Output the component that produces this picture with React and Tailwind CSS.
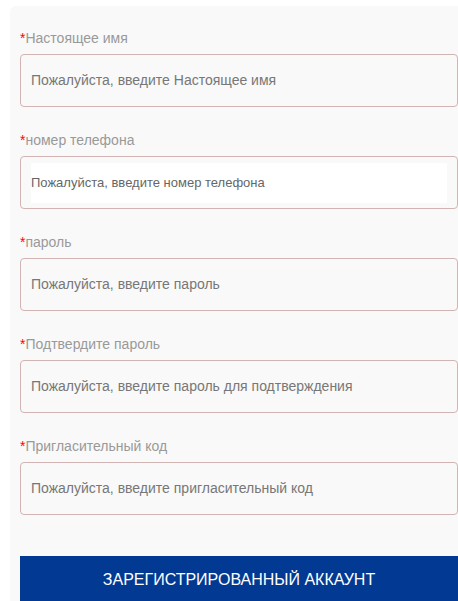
const fields = [
  { label: 'Настоящее имя', placeholder: 'Пожалуйста, введите Настоящее имя' },
  { label: 'номер телефона', placeholder: 'Пожалуйста, введите номер телефона', filled: true },
  { label: 'пароль', placeholder: 'Пожалуйста, введите пароль' },
  { label: 'Подтвердите пароль', placeholder: 'Пожалуйста, введите пароль для подтверждения' },
  { label: 'Пригласительный код', placeholder: 'Пожалуйста, введите пригласительный код' },
];

export default function App() {
  return (
    <div className="w-[458px] h-[601px] overflow-hidden bg-white font-['Liberation_Sans',Arial,sans-serif]">
      <div className="ml-[10px] mt-[6px] w-[460px] rounded-tl-md bg-[#f9f9f9] pl-[10px] pt-[22px] pb-[10px]">
        {fields.map((f) => (
          <div key={f.label} className="mb-[23px] w-[438px]">
            <div className="h-[20px] leading-[20px] text-[14px] text-[#999]">
              <span className="text-[#f00]">*</span>
              {f.label}
            </div>
            <div className="mt-[6px] flex h-[53px] items-center rounded border border-[#d1b4b4] px-[10px]">
              {f.filled ? (
                <div className="flex h-[40px] w-full items-center bg-white text-[13px] text-[#666]">
                  {f.placeholder}
                </div>
              ) : (
                <span className="text-[14px] text-[#777]">{f.placeholder}</span>
              )}
            </div>
          </div>
        ))}
        <button
          type="button"
          className="mt-[41px] flex h-[48px] w-[438px] items-center justify-center bg-[#023a93] text-[16px] uppercase text-white"
        >
          Зарегистрированный аккаунт
        </button>
      </div>
    </div>
  );
}
